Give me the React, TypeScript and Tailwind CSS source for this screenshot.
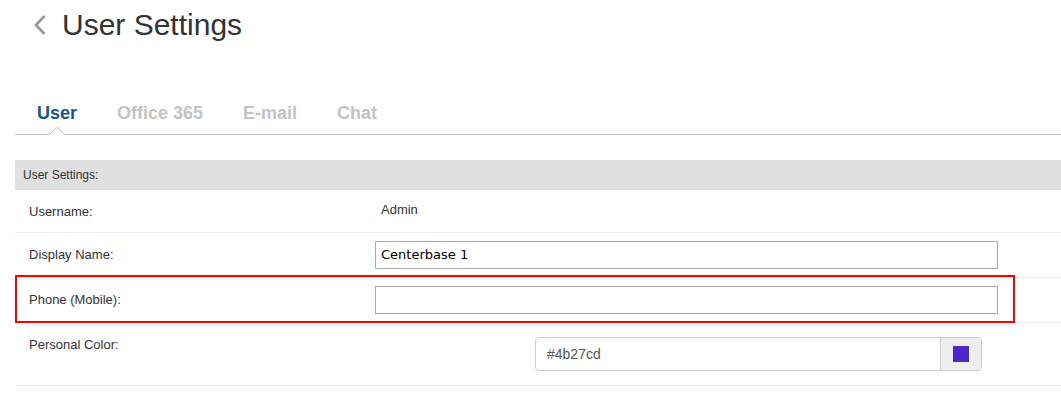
import React from "react";

const sans = { fontFamily: '"Liberation Sans", Arial, sans-serif' };

function Row({
  label,
  children,
  className = "",
  labelPt = "pt-[14px]",
  overlay,
}: {
  label: string;
  children?: React.ReactNode;
  className?: string;
  labelPt?: string;
  overlay?: React.ReactNode;
}) {
  return (
    <div className={`relative flex border-b border-[#ececec] ${className}`}>
      <div className={`w-[360px] shrink-0 pl-[14px] text-[13px] leading-[15px] text-[#333] ${labelPt}`}>{label}</div>
      <div className="flex-1">{children}</div>
      {overlay}
    </div>
  );
}

export default function App() {
  return (
    <div className="w-[1061px] h-[398px] overflow-hidden bg-white" style={sans}>
      {/* Title */}
      <div className="flex items-center pl-[32px] pt-[7px] h-[43px]">
        <svg width="16" height="22" viewBox="0 0 16 22" className="mr-[14px]">
          <polyline points="12.5,2 4,11 12.5,20" fill="none" stroke="#9a9a9a" strokeWidth="2.8" />
        </svg>
        <h1 className="text-[30px] leading-[36px] text-[#333]">User Settings</h1>
      </div>

      <div className="pl-[15px]">
        {/* Tabs */}
        <div className="mt-[59px] flex gap-[40px] pl-[22px] border-b border-[#bbbbbb]">
          <div className="relative pb-[10px] text-[18px] leading-[22px] font-bold text-[#1a5586]">
            User
            <svg width="16" height="8" viewBox="0 0 16 8" className="absolute bottom-[-1px] left-1/2 -translate-x-1/2">
              <polygon points="0,8 8,0.5 16,8" fill="#fff" />
              <polyline points="0,7.5 8,0.5 16,7.5" fill="none" stroke="#bbbbbb" strokeWidth="1" />
            </svg>
          </div>
          <div className="pb-[10px] text-[18px] leading-[22px] font-bold text-[#c3c3c3]">Office 365</div>
          <div className="pb-[10px] text-[18px] leading-[22px] font-bold text-[#c3c3c3]">E-mail</div>
          <div className="pb-[10px] text-[18px] leading-[22px] font-bold text-[#c3c3c3]">Chat</div>
        </div>

        {/* Section header */}
        <div className="mt-[25px] h-[30px] bg-[#e0e0e0] pl-[8px] flex items-center text-[12px] text-[#333]">
          User Settings:
        </div>

        <Row label="Username:" className="h-[43px]">
          <div className="pt-[12px] pl-[6px] text-[13px] leading-[15px] text-[#333]">Admin</div>
        </Row>

        <Row label="Display Name:" className="h-[45px]">
          <div className="pt-[8px]">
            <div
              className="w-[623px] h-[28px] border border-[#a9a9a9] pl-[5px] flex items-center text-[13px] text-black"
              style={{ fontFamily: '"DejaVu Sans", Verdana, sans-serif' }}
            >
              Centerbase 1
            </div>
          </div>
        </Row>

        <Row
          label="Phone (Mobile):"
          className="h-[45px]"
          overlay={
            <div className="absolute left-0 top-[-3px] w-[1000px] h-[48px] border-2 border-[#ff0000] pointer-events-none" />
          }
        >
          <div className="pt-[8px]">
            <div className="w-[623px] h-[28px] border border-[#a9a9a9]" />
          </div>
        </Row>

        <Row label="Personal Color:" className="h-[63px]">
          <div className="pt-[14px] pl-[160px]">
            <div className="flex w-[447px] h-[34px] border border-[#cccccc] rounded-[4px] overflow-hidden">
              <div className="flex-1 flex items-center pl-[11px] text-[14px] text-[#555]">#4b27cd</div>
              <div className="w-[41px] bg-[#eeeeee] border-l border-[#cccccc] flex items-center justify-center">
                <div className="w-[16px] h-[16px] bg-[#4b27cd]" />
              </div>
            </div>
          </div>
        </Row>
      </div>
    </div>
  );
}
